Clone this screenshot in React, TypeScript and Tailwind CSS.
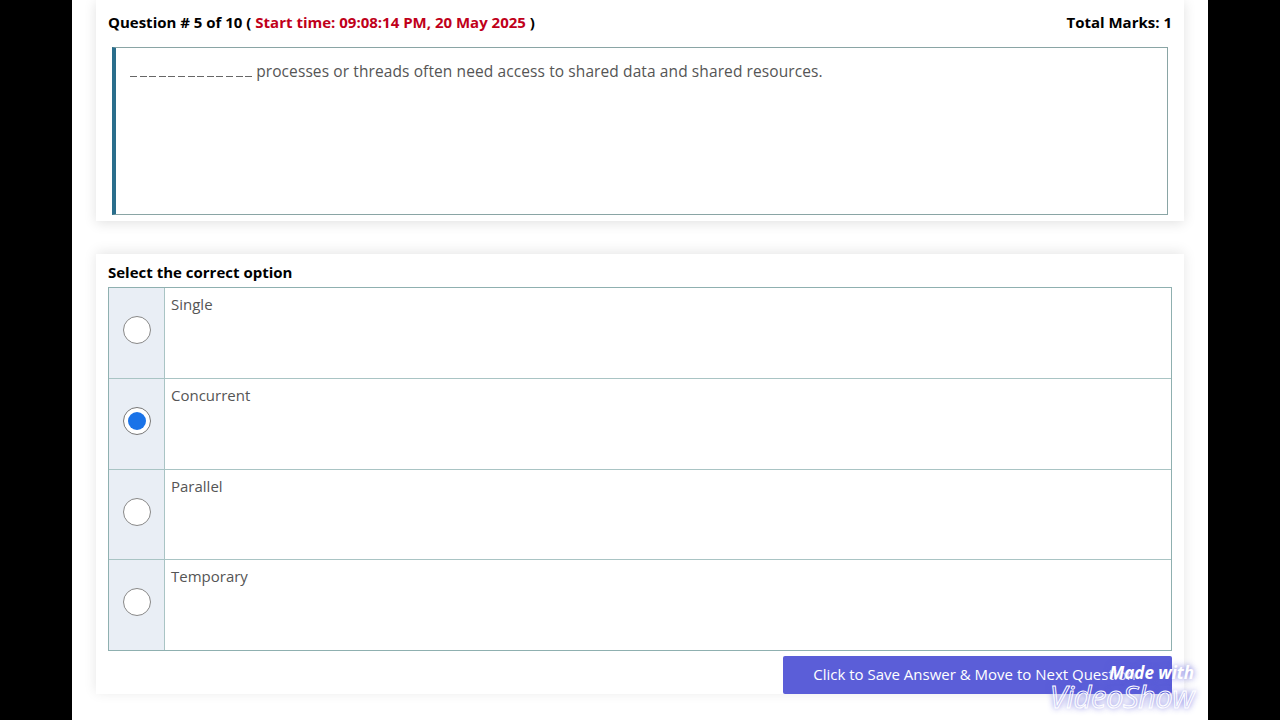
const options = [
  { label: "Single", checked: false },
  { label: "Concurrent", checked: true },
  { label: "Parallel", checked: false },
  { label: "Temporary", checked: false },
];

const font = { fontFamily: '"Open Sans", "Noto Sans", sans-serif' };

export default function App() {
  return (
    <div className="relative h-[720px] w-[1280px] overflow-hidden bg-black" style={font}>
      <div className="mx-[72px] h-full bg-white px-[24px]">
        {/* question card */}
        <div className="bg-white px-[12px] pb-[6px] shadow-[0_2px_12px_rgba(0,0,0,0.12)]">
          <div className="flex h-[44px] items-center justify-between text-[15px] font-bold text-black">
            <div>
              Question # 5 of 10 ({" "}
              <span className="text-[#c0001a]">Start time: 09:08:14 PM, 20 May 2025</span> )
            </div>
            <div>Total Marks: 1</div>
          </div>
          <div className="mx-[4px] mt-[3px] h-[168px] border border-l-[4px] border-[#8aa5a5] border-l-[#2a6e8c] bg-white px-[14px] pt-[12px] text-[15.5px] tracking-[0.1px] text-[#555]">
            <span className="mr-[4px] inline-flex gap-[2.6px]">
              {Array.from({ length: 13 }).map((_, i) => (
                <span key={i} className="inline-block h-[1px] w-[7px] bg-[#666]" />
              ))}
            </span>
            processes or threads often need access to shared data and shared resources.
          </div>
        </div>

        {/* options card */}
        <div className="mt-[33px] bg-white px-[12px] pt-[7px] shadow-[0_-2px_12px_rgba(0,0,0,0.10)]">
          <div className="mb-[3px] text-[15px] font-bold text-black">Select the correct option</div>
          <div className="border border-[#8fb0b0]">
            {options.map((o, i) => (
              <div key={o.label} className={`flex h-[90.5px] ${i > 0 ? "border-t border-[#a9c4c4]" : ""}`}>
                <div className="flex w-[56px] shrink-0 items-start justify-center border-r border-[#a9c4c4] bg-[#e9eef5] pt-[28px]">
                  {o.checked ? (
                    <div className="flex h-[28px] w-[28px] items-center justify-center rounded-full border border-[#777] bg-white">
                      <div className="h-[18px] w-[18px] rounded-full bg-[#1a73e8]" />
                    </div>
                  ) : (
                    <div className="h-[28px] w-[28px] rounded-full border border-[#888] bg-white" />
                  )}
                </div>
                <div className="flex-1 px-[6px] pt-[5px] text-[15px] text-[#555]">{o.label}</div>
              </div>
            ))}
          </div>
          <div className="flex justify-end pt-[5px]">
            <button className="h-[38px] w-[389px] rounded-[2px] bg-[#5b5ed8] pr-[6px] text-[15px] text-white">
              Click to Save Answer &amp; Move to Next Question
            </button>
          </div>
        </div>
      </div>

      {/* watermark */}
      <div className="absolute right-[86px] top-[664px] flex flex-col items-end leading-none text-white [text-shadow:0_0_6px_rgba(90,90,220,0.9)]">
        <span className="text-[17px] font-bold italic">Made with</span>
        <span className="text-[31px] italic tracking-[-0.5px] text-transparent [-webkit-text-stroke:1px_white]">VideoShow</span>
      </div>
    </div>
  );
}
